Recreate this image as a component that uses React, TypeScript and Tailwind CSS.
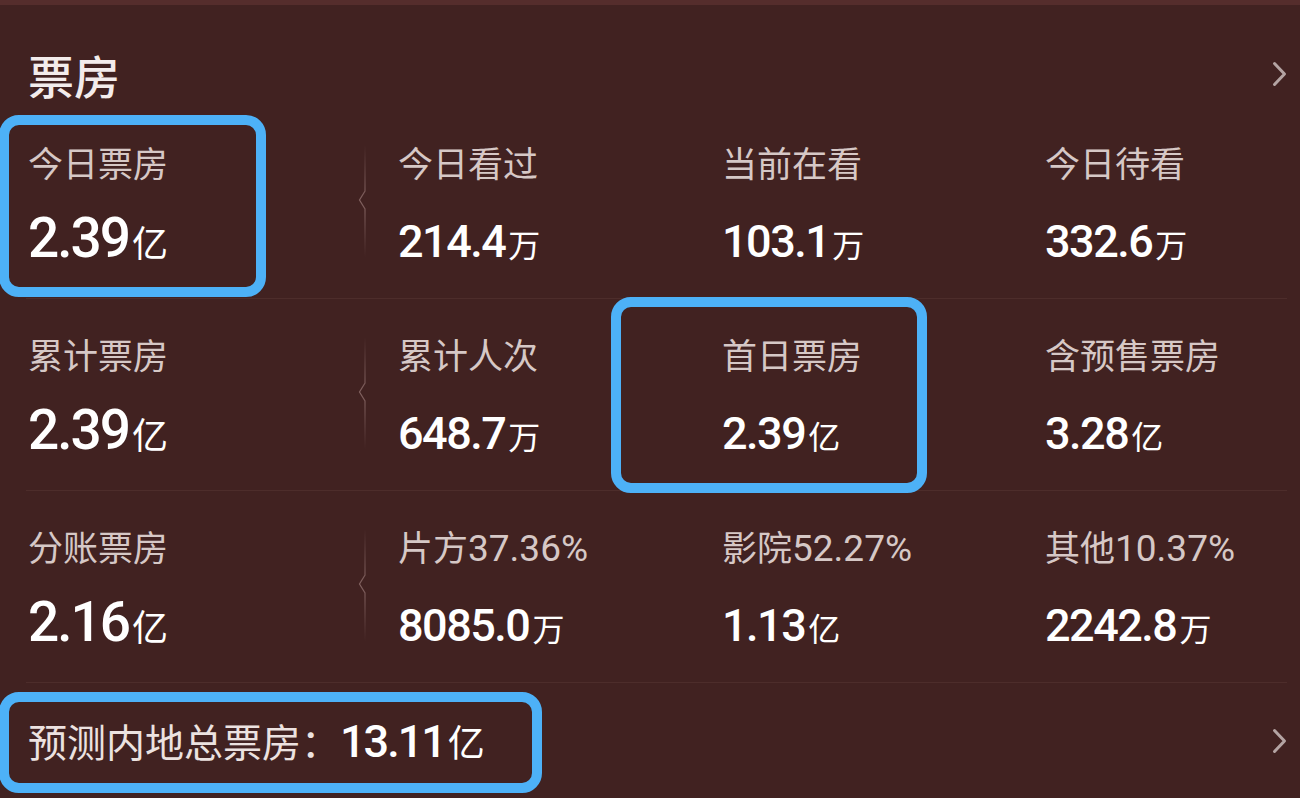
import React from "react";

const NUM = "font-['Roboto','Liberation_Sans',sans-serif]";

type Cell = { label: string; num: string; unit: string };

const rows: Cell[][] = [
  [
    { label: "今日票房", num: "2.39", unit: "亿" },
    { label: "今日看过", num: "214.4", unit: "万" },
    { label: "当前在看", num: "103.1", unit: "万" },
    { label: "今日待看", num: "332.6", unit: "万" },
  ],
  [
    { label: "累计票房", num: "2.39", unit: "亿" },
    { label: "累计人次", num: "648.7", unit: "万" },
    { label: "首日票房", num: "2.39", unit: "亿" },
    { label: "含预售票房", num: "3.28", unit: "亿" },
  ],
  [
    { label: "分账票房", num: "2.16", unit: "亿" },
    { label: "片方37.36%", num: "8085.0", unit: "万" },
    { label: "影院52.27%", num: "1.13", unit: "亿" },
    { label: "其他10.37%", num: "2242.8", unit: "万" },
  ],
];

function Label({ text }: { text: string }) {
  const m = text.match(/^([^\d]+)([\d.%]*)$/);
  const cjk = m ? m[1] : text;
  const n = m ? m[2] : "";
  return (
    <div className="h-[40px] mt-[35px] flex items-baseline text-[35px] leading-[40px] text-[#d6c8c6] whitespace-nowrap">
      <span>{cjk}</span>
      {n && <span className={`${NUM} text-[37px] leading-[40px] tracking-[0px]`}>{n}</span>}
    </div>
  );
}

function Value({ num, unit, big }: { num: string; unit: string; big?: boolean }) {
  return (
    <div className="h-[56px] mt-[30px] flex items-baseline text-white whitespace-nowrap">
      {big ? (
        <span className={`${NUM} font-medium text-[55px] leading-[52px] tracking-[-2px]`}>{num}</span>
      ) : (
        <span className={`${NUM} font-medium text-[45px] leading-[60px] tracking-[-1.5px]`}>{num}</span>
      )}
      {big ? (
        <span className="text-[36px] leading-[56px] ml-[3px]">{unit}</span>
      ) : (
        <span className="text-[32px] leading-[56px] ml-[3px]">{unit}</span>
      )}
    </div>
  );
}

function Separator() {
  return (
    <div className="w-[10px] pt-[38px]">
      <svg width="10" height="112" viewBox="0 0 10 112">
        <defs>
          <linearGradient id="sepg" x1="0" y1="0" x2="0" y2="1">
            <stop offset="0" stopColor="#8a6a68" stopOpacity="0" />
            <stop offset="0.5" stopColor="#8a6a68" stopOpacity="0.9" />
            <stop offset="1" stopColor="#8a6a68" stopOpacity="0" />
          </linearGradient>
        </defs>
        <path d="M7 0 V46 L1.5 55 L7 64 V112" fill="none" stroke="url(#sepg)" strokeWidth="1.2" />
      </svg>
    </div>
  );
}

function Chevron() {
  return (
    <svg width="15" height="26" viewBox="0 0 15 26">
      <path d="M2.5 2.5 L12.5 13 L2.5 23.5" fill="none" stroke="#b4a4a3" strokeWidth="3" strokeLinecap="round" strokeLinejoin="round" />
    </svg>
  );
}

export default function App() {
  return (
    <div className="relative w-[1300px] h-[798px] overflow-hidden bg-[#412221] font-['Noto_Sans_CJK_SC','Noto_Sans',sans-serif]">
      <div className="h-[5px] bg-[#552d2c]" />
      <div className="ml-[26px] mr-[13px] h-[102px] pt-[36px] flex items-center justify-between">
        <div className="pl-[2px] text-[46px] leading-[66px] font-medium text-[#f3ecec]">票房</div>
        <Chevron />
      </div>
      <div className="ml-[26px] mr-[13px]">
        {rows.map((row, ri) => (
          <div key={ri} className="flex h-[192px] border-b border-[#4d2d2b]">
            <div className="w-[332px] pl-[2px] flex flex-col">
              <Label text={row[0].label} />
              <Value num={row[0].num} unit={row[0].unit} big />
            </div>
            <Separator />
            <div className="w-[30px]" />
            {row.slice(1).map((c, ci) => (
              <div key={ci} className={`${ci === 0 ? "w-[324px]" : ci === 1 ? "w-[323px]" : "flex-1"} flex flex-col`}>
                <Label text={c.label} />
                <Value num={c.num} unit={c.unit} />
              </div>
            ))}
          </div>
        ))}
        <div className="h-[115px] flex items-center justify-between">
          <div className="pl-[2px] flex items-baseline text-[#ece2e0] whitespace-nowrap">
            <span className="text-[39px] leading-[56px]">预测内地总票房：</span>
            <span className={`${NUM} text-[45px] leading-[56px] font-medium tracking-[-2px] text-white`}>13.11</span>
            <span className="text-[37px] leading-[56px] text-white ml-[3px]">亿</span>
          </div>
          <Chevron />
        </div>
      </div>

      <div className="absolute left-[-1px] top-[115px] w-[267px] h-[182px] border-[10px] border-[#4db1f7] rounded-[20px]" />
      <div className="absolute left-[611px] top-[297px] w-[316px] h-[196px] border-[10px] border-[#4db1f7] rounded-[20px]" />
      <div className="absolute left-[-1px] top-[692px] w-[543px] h-[101px] border-[10px] border-[#4db1f7] rounded-[20px]" />
    </div>
  );
}
